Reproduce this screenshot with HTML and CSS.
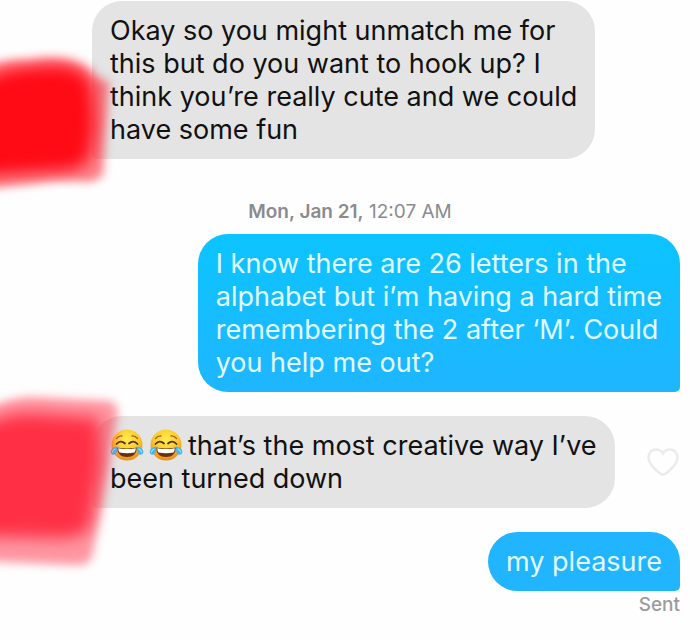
FILE: index.html
```html
<!DOCTYPE html>
<html lang="en">
<head>
<meta charset="utf-8">
<meta name="viewport" content="width=device-width, initial-scale=1">
<title>Messages</title>
<link rel="stylesheet" href="styles.css">
</head>
<body>
<svg class="defs" aria-hidden="true">
  <defs>
    <radialGradient id="face" cx="50%" cy="32%" r="68%">
      <stop offset="0" stop-color="#ffed50"/>
      <stop offset="0.55" stop-color="#fccb30"/>
      <stop offset="1" stop-color="#e88a1c"/>
    </radialGradient>
    <symbol id="joy" viewBox="0 0 34 34">
      <circle cx="17" cy="17" r="15.5" fill="url(#face)"/>
      <path d="M6.500 10.500q2.500-2.800 5.500-2.500M22 8q3-.3 5.500 2.500" fill="none" stroke="#a0601c" stroke-width="1.300" stroke-linecap="round"/>
      <path d="M6.500 16q4.200-4.600 8.500-.5M19 15.500q4.300-4.100 8.500.5" fill="none" stroke="#55330f" stroke-width="1.800" stroke-linecap="round"/>
      <path d="M7 19.500Q17 21.500 27 19.500Q26.500 29 17 29Q7.500 29 7 19.500Z" fill="#6a3010"/>
      <path d="M8.200 20.200Q17 22 25.800 20.200Q25.600 23.700 24.500 24.500Q17 26 9.500 24.500Q8.400 23.700 8.200 20.200Z" fill="#fff"/>
      <path d="M7.500 18.500C3 19 .5 21.500.7 24.200C1 27.200 5 27.500 6.300 24.800C7.200 22.800 7.500 20.500 7.500 18.500Z" fill="#48b5ea"/>
      <path d="M26.500 18.500C31 19 33.500 21.500 33.300 24.200C33 27.200 29 27.500 27.700 24.800C26.800 22.800 26.500 20.500 26.500 18.500Z" fill="#48b5ea"/>
      <path d="M2.500 24q.3-2 2.500-3M31.500 24q-.3-2-2.500-3" fill="none" stroke="#a5e4fa" stroke-width="1.200" stroke-linecap="round"/>
    </symbol>
  </defs>
</svg>
<main class="chat">
  <div class="row received">
    <p class="bubble">Okay so you might unmatch me for<br>this but do you want to hook up? I<br>think you’re really cute and we could<br>have some fun</p>
    <svg class="smear smear-first" viewBox="0 0 130 160" aria-hidden="true">
      <path class="haze" d="M-20 18Q0 9 30 10Q70 3 90 20L97 28L109 32L105 85L103 126L90 132Q60 128 30 134L-20 139Z" fill="#ff2b3a" opacity=".6"/>
      <path class="core" d="M-20 32Q5 17 30 17Q74 11 86 26L92 36L95 75L90 106Q82 121 60 121L-20 126Z" fill="#ff0b16"/>
    </svg>
  </div>
  <time class="stamp"><strong>Mon, Jan 21,</strong> 12:07 AM</time>
  <div class="row sent">
    <p class="bubble">I know there are 26 letters in the<br>alphabet but i’m having a hard time<br>remembering the 2 after ‘M’. Could<br>you help me out?</p>
  </div>
  <div class="row received spaced">
    <p class="bubble"><svg class="emoji" role="img" aria-label="😂"><use href="#joy"/></svg><svg class="emoji" role="img" aria-label="😂"><use href="#joy"/></svg>that’s the most creative way I’ve<br>been turned down</p>
    <button class="like" type="button" aria-label="Like">
      <svg viewBox="0 0 34 30" aria-hidden="true"><path d="M17 27.500C14.500 27.500 2.500 18 2.500 10.500C2.500 5.500 6 2.500 10 2.500C13 2.500 15.500 4 17 6.500C18.500 4 21 2.500 24 2.500C28 2.500 31.500 5.500 31.500 10.500C31.500 18 19.500 27.500 17 27.500Z" fill="none" stroke="#ebebeb" stroke-width="2.500"/></svg>
    </button>
    <svg class="smear smear-second" viewBox="0 0 140 200" aria-hidden="true">
      <path class="haze" d="M-20 34Q5 19 30 18L110 22Q120 26 117 40L110 75L103 120L92 178Q88 187 75 186L-20 182Z" fill="#ff3046" opacity=".5"/>
      <path class="core" d="M-20 48Q5 34 30 34L99 39L101 85L90 146Q86 158 60 159L-20 157Z" fill="#ff3046"/>
    </svg>
  </div>
  <div class="row sent last spaced">
    <p class="bubble">my pleasure</p>
  </div>
  <div class="status">Sent</div>
</main>
</body>
</html>
```
FILE: styles.css
```css
* {
  box-sizing: border-box;
}

body {
  margin: 0;
  background: #fefefe;
  color: #111;
  font-family: Inter, "Liberation Sans", sans-serif;
  overflow-x: hidden;
}

.defs {
  position: absolute;
  width: 0;
  height: 0;
}

.chat {
  display: flex;
  flex-direction: column;
  padding: 1px 20px 24px 92px;
}

.row {
  position: relative;
  display: flex;
  align-items: center;
}

.sent {
  justify-content: flex-end;
}

.received {
  justify-content: space-between;
}

.spaced {
  margin-top: 24px;
}

.bubble {
  margin: 0;
  padding: 13px 18px;
  border-radius: 30px;
  font-size: 27px;
  line-height: 33px;
  white-space: nowrap;
}

.received .bubble {
  background: #e4e4e4;
  border-bottom-left-radius: 5px;
}

.sent .bubble {
  background: linear-gradient(#0cc4ff, #1fb6ff);
  border-bottom-right-radius: 5px;
  color: #e2fbff;
}

.last .bubble {
  background: #21b4ff;
}

.emoji {
  width: 34px;
  height: 34px;
  margin: -6px 5px -6px 0;
  vertical-align: -1px;
}

.stamp {
  margin: 41px 0 10px -72px;
  text-align: center;
  font-size: 19px;
  line-height: 24px;
  color: #8b8b8f;
}

.stamp strong {
  font-weight: 600;
}

.like {
  width: 34px;
  height: 30px;
  margin: 0;
  padding: 0;
  border: 0;
  background: none;
}

.like svg {
  display: block;
  width: 100%;
}

.status {
  align-self: flex-end;
  margin-top: 2px;
  font-size: 19px;
  font-weight: 500;
  line-height: 24px;
  color: #9b9b9f;
}

.smear {
  position: absolute;
  left: -92px;
  overflow: visible;
  pointer-events: none;
}

.smear-first {
  top: 49px;
  width: 130px;
  height: 160px;
}

.smear-second {
  top: -37px;
  width: 140px;
  height: 200px;
}

.haze {
  filter: blur(5px);
}

.core {
  filter: blur(8px);
}
```
